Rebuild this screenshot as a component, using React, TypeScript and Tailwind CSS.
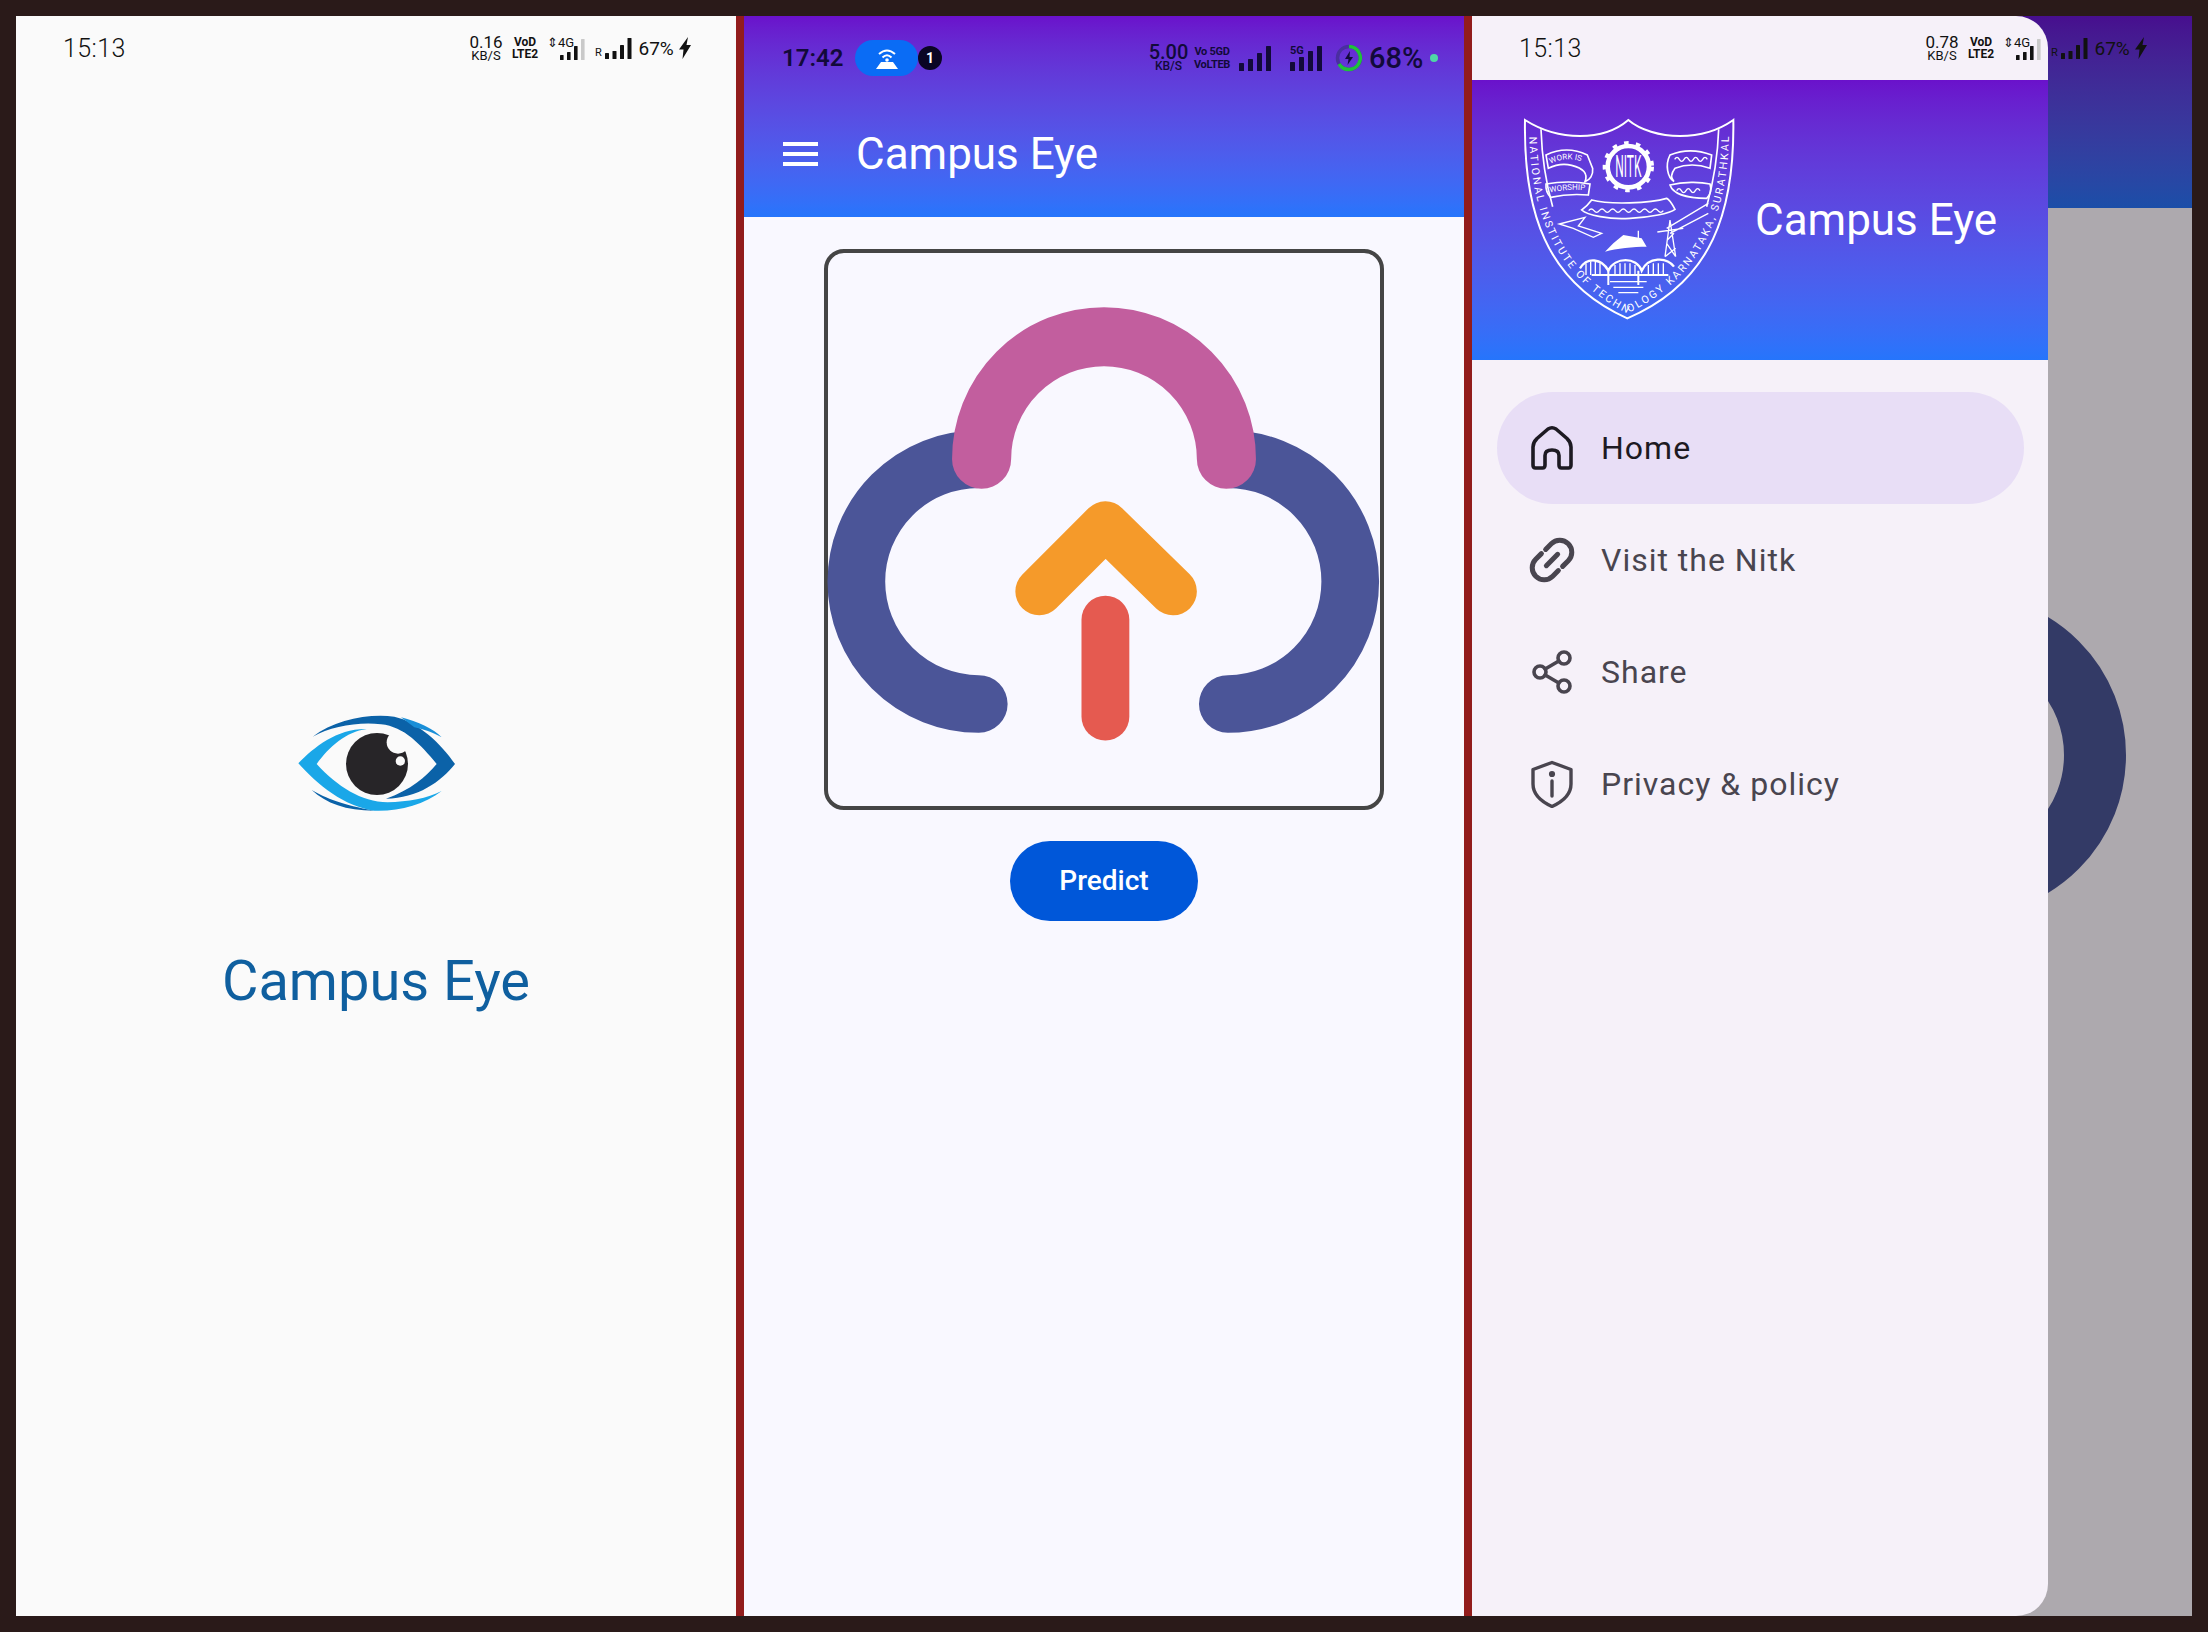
import { Share2 } from 'lucide-react';

function Signal({
  bars,
  faded = false,
  step = 7.5,
  barWidth = 4,
}: {
  bars: number[];
  faded?: boolean;
  step?: number;
  barWidth?: number;
}) {
  const max = Math.max(...bars);
  return (
    <svg width={(bars.length - 1) * step + barWidth} height={max} className="shrink-0">
      {bars.map((h, i) => (
        <rect
          key={i}
          x={i * step}
          y={max - h}
          width={barWidth}
          height={h}
          rx={0.6}
          fill={faded && i === bars.length - 1 ? '#c9c9c9' : 'currentColor'}
        />
      ))}
    </svg>
  );
}

function Bolt({ className }: { className?: string }) {
  return (
    <svg viewBox="0 0 12 22" className={className}>
      <path d="M9 0 L7.5 8 L12 8 L3.5 22 L4.5 12.5 L0 12.5 Z" fill="currentColor" />
    </svg>
  );
}

// status bar shared by the splash screen and the drawer screen
function LightStatusBar({ speed }: { speed: string }) {
  return (
    <div className="flex h-16 w-[720px] shrink-0 items-center pl-[47px] text-[#111]">
      <span className="w-[409px] shrink-0 font-['Roboto',sans-serif] text-[25px] leading-none font-light tracking-[0.4px]">
        15:13
      </span>
      <div className="flex items-center font-['Liberation_Sans_Narrow','Roboto',sans-serif]">
        <div className="flex w-[28px] flex-col items-center leading-none">
          <span className="text-[17px] leading-[15px]">{speed}</span>
          <span className="text-[13px] leading-[12px]">KB/S</span>
        </div>
        <div className="ml-[13px] flex w-[24px] flex-col items-center text-[12px] leading-[12px] font-bold">
          <span>VoD</span>
          <span>LTE2</span>
        </div>
        <div className="relative ml-[10px] h-[24px] w-[38px]">
          <span className="absolute top-0 left-0 text-[13px] leading-[13px]">⇕4G</span>
          <div className="absolute right-0 bottom-0 flex items-end">
            <Signal bars={[5, 8, 14, 21]} faded step={7} barWidth={3.6} />
          </div>
        </div>
        <span className="mt-[8px] ml-[10px] w-[7px] text-[11px] leading-none">R</span>
        <div className="ml-[3px] flex items-end">
          <Signal bars={[6, 8, 14, 21]} />
        </div>
        <span className="ml-[7px] w-[35px] text-[19px] leading-none">67%</span>
        <Bolt className="ml-[5px] h-[22px] w-[12px]" />
      </div>
    </div>
  );
}

function EyeLogo() {
  return (
    <svg viewBox="0 0 630 450" className="h-[150px] w-[210px]">
      <path
        d="M125 140 C190 90 290 70 370 80 C440 95 510 160 552 222 C510 275 440 325 345 326 C420 300 465 260 497 222 C450 165 400 110 330 103 C260 95 180 110 125 140 Z"
        fill="#0b62a8"
      />
      <path d="M390 82 C440 95 490 118 512 142 C480 125 455 118 430 112 Z" fill="#1a8fd8" />
      <path d="M122 300 C165 325 215 345 310 362 C225 362 165 340 122 300 Z" fill="#0b62a8" />
      <path
        d="M82 220 C130 170 200 115 287 117 C225 125 175 170 137 222 C200 290 270 335 350 337 C410 335 470 325 512 303 C460 345 380 365 310 362 C220 350 140 285 82 220 Z"
        fill="#1aa7e8"
      />
      <circle cx="318" cy="222" r="93" fill="#272528" />
      <circle cx="381" cy="157" r="34" fill="#fafafa" />
      <circle cx="388" cy="213" r="14" fill="#fafafa" />
    </svg>
  );
}

function SplashScreen() {
  return (
    <div className="flex flex-col items-center bg-[#fafafa]">
      <LightStatusBar speed="0.16" />
      <div className="mt-[610px]">
        <EyeLogo />
      </div>
      <h1 className="mt-[113px] font-['Roboto',sans-serif] text-[56px] leading-none font-normal text-[#0f5f9f]">
        Campus Eye
      </h1>
    </div>
  );
}

function UploadCloud() {
  return (
    <svg viewBox="585 177 398 398" className="-m-[4px] h-[561px] w-[560px]" fill="none" strokeLinecap="round" strokeLinejoin="round">
      <path d="M695 326 A87 87 0 0 0 695 500" stroke="#4b5598" strokeWidth="41" />
      <path d="M872 326 A87 87 0 0 1 872 500" stroke="#4b5598" strokeWidth="41" />
      <path d="M697 326 A87 87 0 0 1 871 326" stroke="#c25e9e" strokeWidth="42" />
      <path d="M738 420 L785 373 L833 420" stroke="#f59a2a" strokeWidth="34" />
      <path d="M785 440 V509" stroke="#e55a50" strokeWidth="34" />
    </svg>
  );
}

function PredictScreen() {
  return (
    <div className="flex flex-col bg-[#f9f8ff]">
      <div className="bg-gradient-to-b from-[#6a11cb] to-[#2575fc]">
        <div className="flex h-[84px] items-center pl-[38px] text-[#120a3a]">
          <span className="w-[73px] font-['Roboto',sans-serif] text-[24px] leading-none font-semibold">17:42</span>
          <div className="flex h-[36px] w-[63px] items-center justify-center rounded-[18px] bg-[#0a6cf5]">
            <svg viewBox="0 0 28 24" className="h-[24px] w-[28px]" fill="none">
              <path d="M6 8 Q14 1 22 8" stroke="#fff" strokeWidth="2" />
              <path d="M9.5 11.5 Q14 7 18.5 11.5" stroke="#fff" strokeWidth="2" />
              <circle cx="14" cy="14" r="1.8" fill="#fff" />
              <path d="M8 16 H20 L25 23 H3 Z" fill="#fff" />
            </svg>
          </div>
          <div className="flex h-[24px] w-[24px] items-center justify-center rounded-full bg-[#0a0524] font-['Roboto',sans-serif] text-[14px] font-bold text-white">
            1
          </div>
          <div className="ml-[206px] flex items-center">
            <div className="flex w-[41px] flex-col items-center font-['Roboto',sans-serif] leading-none font-medium">
              <span className="text-[20px] leading-[17px]">5.00</span>
              <span className="text-[12px] leading-[11px]">KB/S</span>
            </div>
            <div className="ml-[3px] flex w-[40px] flex-col items-center font-['Liberation_Sans_Narrow','Roboto',sans-serif] text-[11px] leading-[13px] font-bold tracking-[-0.3px] whitespace-nowrap">
              <span>Vo 5GD</span>
              <span>VoLTEB</span>
            </div>
            <div className="ml-[7px] flex items-end">
              <Signal bars={[8, 12, 18, 25]} step={9} barWidth={5} />
            </div>
            <div className="relative ml-[19px] h-[26px] w-[32px]">
              <span className="absolute top-0 left-0 font-['Roboto',sans-serif] text-[11px] leading-none font-bold">5G</span>
              <div className="absolute right-0 bottom-0 flex items-end">
                <Signal bars={[9, 14, 20, 25]} step={9} barWidth={5} />
              </div>
            </div>
            <svg viewBox="0 0 28 28" className="ml-[13px] h-[28px] w-[28px]" fill="none">
              <circle cx="14" cy="14" r="11.5" stroke="#4a2ea0" strokeWidth="3.5" />
              <path d="M14 2.5 A11.5 11.5 0 1 1 4 20" stroke="#1fc23a" strokeWidth="3.5" />
              <path d="M15 7 L10 15 H13.5 L12.5 21 L18 13 H14.5 Z" fill="#120a3a" />
            </svg>
            <span className="ml-[6px] w-[54px] font-['Roboto',sans-serif] text-[29px] leading-none font-medium whitespace-nowrap">68%</span>
            <div className="ml-[7px] h-[8px] w-[8px] rounded-full bg-[#4fd6a6]" />
          </div>
        </div>
        <div className="flex h-[117px] items-center pb-[10px] pl-[39px] text-white">
          <svg width="35" height="24" className="shrink-0" fill="#fff">
            <rect x="0" y="0" width="35" height="4" />
            <rect x="0" y="10" width="35" height="4" />
            <rect x="0" y="20" width="35" height="4" />
          </svg>
          <span className="ml-[38px] font-['Roboto',sans-serif] text-[44px] leading-none font-normal">Campus Eye</span>
        </div>
      </div>
      <div className="flex flex-col items-center pt-8">
        <div className="box-border h-[561px] w-[560px] rounded-[20px] border-[4px] border-[#454545]">
          <UploadCloud />
        </div>
        <button className="mt-[31px] flex h-[80px] w-[188px] items-center justify-center rounded-full bg-[#0057d9] font-['Roboto',sans-serif] text-[28px] font-medium text-white">
          Predict
        </button>
      </div>
    </div>
  );
}

function NitkCrest() {
  return (
    <svg viewBox="0 0 720 720" className="h-[240px] w-[240px] shrink-0" fill="none" stroke="#fff">
      <path
        d="M45 60 C100 95 150 108 210 108 C270 108 320 90 355 60 C390 90 450 108 510 108 C570 108 620 95 670 60 C674 330 609 545 352 655 C105 545 40 330 45 60 Z"
        strokeWidth="6"
      />
      <path d="M93 88 C95 150 105 240 128 320 M626 88 C624 150 612 240 590 320" strokeWidth="5" />
      <defs>
        <path id="crest-band" d="M58 110 C62 325 128 528 352 640 C586 528 652 325 657 110" />
        <path id="crest-work" d="M122 192 Q172 165 232 190" />
        <path id="crest-worship" d="M120 278 Q175 265 232 272" />
      </defs>
      <text fill="#fff" stroke="none" fontFamily="Roboto, sans-serif" fontSize="32">
        <textPath href="#crest-band" textLength="1290" lengthAdjust="spacing">
          NATIONAL INSTITUTE OF TECHNOLOGY KARNATAKA, SURATHKAL
        </textPath>
      </text>
      {/* gear with the NITK letters */}
      <circle cx="355" cy="200" r="62" strokeWidth="14" />
      <circle cx="355" cy="200" r="72" strokeWidth="10" strokeDasharray="14 22" />
      <text
        transform="translate(355 232) scale(0.62 1.65)"
        fill="#fff"
        stroke="none"
        fontFamily="Roboto, sans-serif"
        fontSize="58"
        textAnchor="middle"
      >
        NITK
      </text>
      {/* left scrolls */}
      <path d="M108 165 Q170 135 232 165 L248 205 C250 225 240 240 225 245 C235 220 220 205 185 196 C160 190 135 195 115 205 Z" strokeWidth="5" />
      <path d="M108 252 Q175 240 240 252 L235 285 Q175 280 122 292 Q106 275 108 252 Z" strokeWidth="5" />
      <text fill="#fff" stroke="none" fontFamily="Roboto, sans-serif" fontSize="24">
        <textPath href="#crest-work">WORK IS</textPath>
      </text>
      <text fill="#fff" stroke="none" fontFamily="Roboto, sans-serif" fontSize="24">
        <textPath href="#crest-worship">WORSHIP</textPath>
      </text>
      {/* right scrolls */}
      <path d="M480 165 Q540 140 605 165 L600 205 Q545 185 495 205 C482 222 482 235 492 245 C472 232 465 195 480 165 Z" strokeWidth="5" />
      <path d="M480 255 C520 245 570 245 600 252 C605 268 600 285 590 295 C540 295 490 285 480 255 Z" strokeWidth="5" />
      <path d="M494 178 q7 -12 14 0 t14 0 t14 0 t14 0 t14 0 t14 0 t14 0" strokeWidth="4" />
      <path d="M500 272 q7 -12 14 0 t14 0 t14 0 t14 0 t14 0" strokeWidth="4" />
      {/* centre banner */}
      <path d="M245 300 C230 320 215 330 215 330 C230 345 300 360 360 355 C420 352 480 340 495 328 C485 310 480 300 470 295 C420 310 300 315 245 300 Z" strokeWidth="5" />
      <path d="M236 332 q8 -10 16 0 t16 0 t16 0 t16 0 t16 0 t16 0 t16 0 t16 0 t16 0 t16 0 t16 0 t16 0 t16 0 t16 0" strokeWidth="4" />
      {/* plane */}
      <path d="M148 372 L225 352 L205 378 L275 400 L250 412 L190 385 Z" strokeWidth="4" />
      {/* ship */}
      <path d="M285 455 C320 445 370 440 410 440 L395 415 L340 405 L310 430 Z" fill="#fff" stroke="none" />
      <path d="M385 418 V392" strokeWidth="4" />
      {/* tower and power lines */}
      <path d="M480 360 L465 470 M480 360 L497 470 M465 470 L497 445 M497 470 L470 430 M472 420 L492 400 M442 396 L520 385 M470 385 L595 310 M480 400 L595 340" strokeWidth="4" />
      {/* bridge */}
      <path d="M210 505 C232 470 275 475 295 512 C315 470 380 470 395 512 C415 470 470 470 492 500" strokeWidth="7" />
      <path
        d="M228 490 V525 M242 485 V525 M256 485 V525 M270 490 V525 M315 495 V525 M330 490 V525 M345 490 V525 M360 490 V525 M375 495 V525 M415 495 V525 M430 490 V525 M445 490 V525 M460 490 V525"
        strokeWidth="4"
      />
      <path d="M245 525 H475 M295 512 V555 M385 512 V555" strokeWidth="6" />
      <path d="M300 545 H410 M310 562 H400 M325 578 H385" strokeWidth="4" />
    </svg>
  );
}

function HomeIcon() {
  return (
    <svg viewBox="0 0 48 48" className="h-12 w-12" fill="none" stroke="currentColor" strokeWidth="3.6" strokeLinejoin="round">
      <path d="M5 41 V23 C5 19 6.5 17 9 14.5 L20 5 Q24 2.5 28 5 L39 14.5 C41.5 17 43 19 43 23 V41 Q43 44 40.5 44 H33.5 Q31 44 31 41 V31.5 Q31 26 24 26 Q17 26 17 31.5 V41 Q17 44 14.5 44 H7.5 Q5 44 5 41 Z" />
    </svg>
  );
}

function LinkIcon() {
  return (
    <svg viewBox="0 0 48 48" className="h-12 w-12" fill="none" stroke="currentColor" strokeWidth="5" strokeLinecap="round">
      <g transform="rotate(-45 24 24)">
        <path d="M21 12 H13 A12 12 0 0 0 13 36 H21" />
        <path d="M27 12 H35 A12 12 0 0 1 35 36 H27" />
        <path d="M16 24 H32" />
      </g>
    </svg>
  );
}

function ShieldIcon() {
  return (
    <svg viewBox="0 0 48 48" className="h-12 w-12" fill="none" stroke="currentColor" strokeWidth="3.4" strokeLinejoin="round">
      <path d="M24 2.5 L43 9.5 V24 C43 34 35 41.5 24 46.5 C13 41.5 5 34 5 24 V9.5 Z" />
      <path d="M24 21 V36" strokeLinecap="round" />
      <circle cx="24" cy="14" r="1.4" fill="currentColor" />
    </svg>
  );
}

const navItems = [
  { label: 'Visit the Nitk', icon: <LinkIcon /> },
  { label: 'Share', icon: <Share2 size={48} strokeWidth={1.8} /> },
  { label: 'Privacy & policy', icon: <ShieldIcon /> },
];

function NavRow({ label, icon, active = false }: { label: string; icon: React.ReactNode; active?: boolean }) {
  return (
    <div
      className={`flex h-[112px] items-center gap-[25px] rounded-full pl-[31px] font-['Roboto',sans-serif] text-[32px] tracking-[1px] ${
        active ? 'bg-[#e8def6] text-[#1d1a22]' : 'text-[#49454f]'
      }`}
    >
      {icon}
      <span>{label}</span>
    </div>
  );
}

function DrawerScreen() {
  return (
    <div className="relative overflow-hidden bg-[#ada9ae]">
      <div className="h-[192px] bg-gradient-to-b from-[#470e8e] to-[#1a4ea8]">
        <LightStatusBar speed="0.78" />
      </div>
      <div className="flex justify-end">
        <svg width="144" height="340" className="mt-[372px]">
          <circle cx="-83" cy="175" r="130" fill="none" stroke="#333a66" strokeWidth="62" />
        </svg>
      </div>
      <div className="absolute inset-y-0 left-0 flex w-[576px] flex-col overflow-hidden rounded-r-[32px] bg-[#f6f1f9]">
        <LightStatusBar speed="0.78" />
        <div className="flex h-[280px] items-center bg-gradient-to-b from-[#6a11cb] to-[#2575fc] pl-[38px] text-white">
          <NitkCrest />
          <span className="ml-[5px] font-['Roboto',sans-serif] text-[44px] leading-none font-normal">Campus Eye</span>
        </div>
        <div className="flex flex-col pt-[32px] pr-6 pl-[25px]">
          <NavRow label="Home" icon={<HomeIcon />} active />
          {navItems.map((item) => (
            <NavRow key={item.label} label={item.label} icon={item.icon} />
          ))}
        </div>
      </div>
    </div>
  );
}

export default function App() {
  return (
    <div className="h-[1632px] w-[2208px] overflow-hidden bg-[#2a1a19] p-4">
      <div className="grid h-[1600px] grid-cols-[720px_720px_720px] gap-x-2 bg-[#921c1c]">
        <SplashScreen />
        <PredictScreen />
        <DrawerScreen />
      </div>
    </div>
  );
}
